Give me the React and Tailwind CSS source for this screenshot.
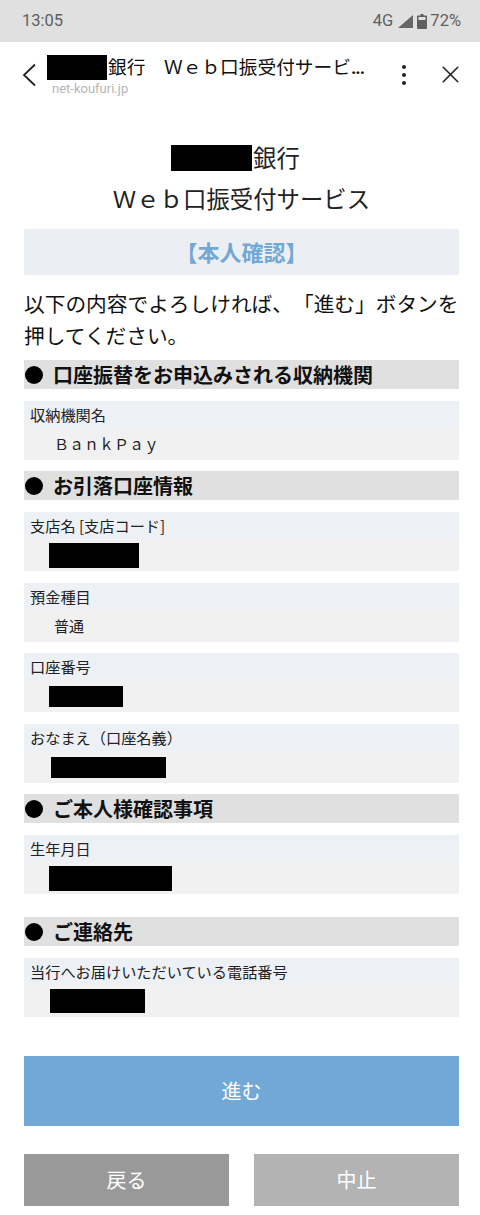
import { X } from "lucide-react";

const font = { jp: "font-['Noto_Sans_CJK_JP','Noto_Sans',sans-serif]" };

function Redacted({ className }) {
  return <span className={`block bg-black ${className}`} />;
}

function SectionBar({ title, className = "" }) {
  return (
    <div className={`flex h-[29px] items-center bg-[#e0e0e0] ${className}`}>
      <span className="ml-[1px] h-[18px] w-[18px] rounded-full bg-black" />
      <h2 className="ml-[10px] text-[20px] font-bold leading-none text-[#111]">{title}</h2>
    </div>
  );
}

function Field({ label, children, className = "" }) {
  return (
    <div className={`h-[59px] ${className}`}>
      <div className="flex h-[27px] items-center bg-[#edf1f6] pl-[6px] text-[15.200px] leading-none text-[#222]">{label}</div>
      <div className="flex h-[32px] items-center bg-[#f1f1f1]">{children}</div>
    </div>
  );
}

export default function App() {
  return (
    <div className={`${font.jp} min-h-[1215px] w-[480px] bg-white text-[#111] [text-spacing-trim:space-all]`}>
      <div className="flex h-[42px] items-center justify-between bg-[#e0e0e0] pl-[22px] pr-[19px] font-['Roboto',sans-serif] text-[16.500px] text-[#5f5f5f]">
        <span>13:05</span>
        <div className="flex items-center">
          <span>4G</span>
          <svg className="ml-[5px]" width="15" height="13" viewBox="0 0 15 13">
            <path d="M15 0V13H0z" fill="#666" />
          </svg>
          <svg className="ml-[4px]" width="10" height="15" viewBox="0 0 10 15">
            <path d="M3.500 0h3v1.500h2.500a1 1 0 0 1 1 1V14a1 1 0 0 1-1 1H1a1 1 0 0 1-1-1V2.500a1 1 0 0 1 1-1h2.500z" fill="#5f5f5f" />
            <rect x="1.500" y="3" width="7" height="3" fill="#e0e0e0" />
          </svg>
          <span className="ml-[3px]">72%</span>
        </div>
      </div>

      <header className="flex h-[64px] items-start">
        <svg className="ml-[22px] mt-[21px] shrink-0" width="14" height="24" viewBox="0 0 14 24" fill="none">
          <path d="M13 1.500 2 12l11 10.500" stroke="#222" strokeWidth="1.800" />
        </svg>
        <div className="ml-[11px] w-[324px] shrink-0 pt-[12px]">
          <div className="flex h-[26px] items-center">
            <Redacted className="h-[25px] w-[60px] shrink-0" />
            <span className="ml-[1px] whitespace-nowrap text-[18.700px] leading-none text-[#111]">銀行　Ｗｅｂ口振受付サービ<span className="font-['Roboto',sans-serif] font-bold tracking-[-1px]">...</span></span>
          </div>
          <div className="ml-[5px] mt-[1px] font-['Roboto',sans-serif] text-[13px] leading-[16px] text-[#b5b5b5]">net-koufuri.jp</div>
        </div>
        <div className="ml-[31px] mt-[23px] flex shrink-0 flex-col gap-[4.500px]">
          <span className="h-[3.500px] w-[3.500px] rounded-full bg-[#222]" />
          <span className="h-[3.500px] w-[3.500px] rounded-full bg-[#222]" />
          <span className="h-[3.500px] w-[3.500px] rounded-full bg-[#222]" />
        </div>
        <X className="ml-[30px] mt-[18px] shrink-0 text-[#222]" size={29} strokeWidth={1.300} />
      </header>

      <main className="mx-[24px] w-[435px]">
        <div className="mt-[38px] flex h-[28px] items-center justify-center pr-[12px]">
          <Redacted className="h-[26px] w-[81px]" />
          <span className="ml-[1px] text-[23.400px] leading-none text-[#222]">銀行</span>
        </div>
        <h1 className="mt-[12px] whitespace-nowrap text-center text-[23.400px] font-normal leading-[28px] text-[#222]">Ｗｅｂ口振受付サービス</h1>
        <div className="mt-[17px] flex h-[46px] items-center justify-center bg-[#ebeff4] pb-[1px] text-[22px] font-bold text-[#72a8d6]">【本人確認】</div>
        <p className="mt-[12px] whitespace-nowrap text-[20.700px] leading-[32px] text-[#111]">
          以下の内容でよろしければ、「進む」ボタンを<br />押してください。
        </p>

        <SectionBar title="口座振替をお申込みされる収納機関" className="mt-[9px]" />
        <Field label="収納機関名" className="mt-[12px]">
          <span className="ml-[30px] whitespace-nowrap text-[15px] text-[#222]">ＢａｎｋＰａｙ</span>
        </Field>

        <SectionBar title="お引落口座情報" className="mt-[11px]" />
        <Field label="支店名 [支店コード]" className="mt-[12px]">
          <Redacted className="ml-[25px] h-[25px] w-[90px]" />
        </Field>
        <Field label="預金種目" className="mt-[12px]">
          <span className="ml-[30px] text-[15px] text-[#222]">普通</span>
        </Field>
        <Field label="口座番号" className="mt-[11px]">
          <Redacted className="ml-[25px] h-[21px] w-[74px]" />
        </Field>
        <Field label="おなまえ（口座名義）" className="mt-[12px]">
          <Redacted className="ml-[27px] h-[21px] w-[115px]" />
        </Field>

        <SectionBar title="ご本人様確認事項" className="mt-[11px]" />
        <Field label="生年月日" className="mt-[12px]">
          <Redacted className="ml-[25px] h-[25px] w-[123px]" />
        </Field>

        <SectionBar title="ご連絡先" className="mt-[23px]" />
        <Field label="当行へお届けいただいている電話番号" className="mt-[12px]">
          <Redacted className="ml-[26px] h-[24px] w-[95px]" />
        </Field>

        <button type="button" className="mt-[39px] block h-[70px] w-full bg-[#72a8d6] text-[20px] text-white">進む</button>
        <div className="mt-[28px] flex justify-between">
          <button type="button" className="h-[52px] w-[205px] bg-[#999] text-[20px] text-white">戻る</button>
          <button type="button" className="h-[52px] w-[205px] bg-[#b3b3b3] text-[20px] text-white">中止</button>
        </div>
      </main>
    </div>
  );
}
